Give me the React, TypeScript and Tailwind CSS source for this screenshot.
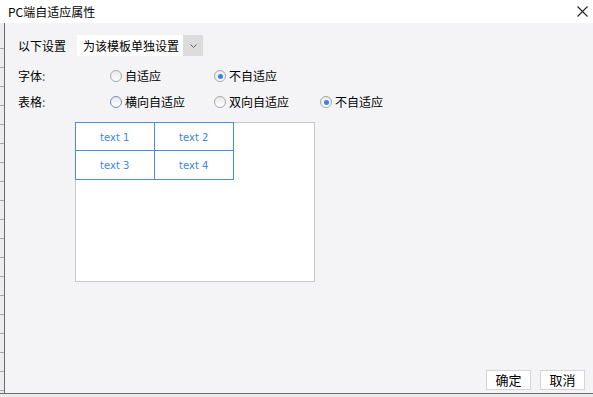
import React from "react";

function Radio({ checked, hover }: { checked?: boolean; hover?: boolean }) {
  return (
    <span
      className={
        "relative inline-flex h-[12px] w-[12px] shrink-0 items-center justify-center rounded-full border bg-[linear-gradient(to_bottom,#e9e9e9,#ffffff)] " +
        (hover ? "border-[#6f8cb2]" : "border-[#a6a6a6]")
      }
    >
      {checked && <span className="h-[5px] w-[5px] rounded-full bg-[#2f86f0]" />}
    </span>
  );
}

function RadioItem({ label, checked, hover, w }: { label: string; checked?: boolean; hover?: boolean; w: string }) {
  return (
    <div className={"flex items-center gap-[3px] " + w}>
      <Radio checked={checked} hover={hover} />
      <span>{label}</span>
    </div>
  );
}

export default function App() {
  return (
    <div
      className="flex h-[397px] w-[593px] flex-col overflow-hidden text-[12px] text-black"
      style={{ fontFamily: '"Noto Sans CJK SC", "Noto Sans", sans-serif' }}
    >
      <div className="flex h-[23px] shrink-0 items-center justify-between bg-white pl-[8px] pr-[5px]">
        <span className="text-[12px] leading-none">PC端自适应属性</span>
        <svg width="11" height="11" viewBox="0 0 11 11">
          <path d="M0.5 0.5 L10.5 10.5 M10.5 0.5 L0.5 10.5" stroke="#222" strokeWidth="1.1" />
        </svg>
      </div>
      <div className="flex min-h-0 flex-1">
        <div className="w-[4px] shrink-0 border-r border-[#6b6b6b] bg-[#ececec] bg-[repeating-linear-gradient(to_bottom,transparent_0,transparent_18px,#a8a8a8_18px,#a8a8a8_19px)] bg-[position:0_7px] box-content" />
        <div className="flex min-w-0 flex-1 flex-col bg-[#f4f4f6] pl-[13px] pt-[12px]">
          <div className="flex h-[21px] items-center">
            <span className="w-[59px]">以下设置</span>
            <div className="flex h-[21px] w-[126px]">
              <div className="flex flex-1 items-center bg-white pl-[6px]">为该模板单独设置</div>
              <div className="flex w-[20px] items-center justify-center bg-[#dcdcdc]">
                <svg width="7" height="4" viewBox="0 0 7 4">
                  <path d="M0.5 0.5 L3.5 3.5 L6.5 0.5" fill="none" stroke="#666" strokeWidth="1" />
                </svg>
              </div>
            </div>
          </div>
          <div className="mt-[12px] flex h-[16px] items-center">
            <span className="w-[92px]">字体<span className="text-[#555]">:</span></span>
            <RadioItem label="自适应" w="w-[104px]" />
            <RadioItem label="不自适应" checked w="w-[106px]" />
          </div>
          <div className="mt-[10px] flex h-[16px] items-center">
            <span className="w-[92px]">表格<span className="text-[#555]">:</span></span>
            <RadioItem label="横向自适应" hover w="w-[104px]" />
            <RadioItem label="双向自适应" w="w-[106px]" />
            <RadioItem label="不自适应" checked w="w-[106px]" />
          </div>
          <div className="ml-[57px] mt-[12px] h-[160px] w-[240px] border border-[#c9c9c9] bg-white">
            <div
              className="-m-px grid w-[159px] grid-cols-2 border border-[#4a8de6] text-[10px] text-[#3b86e6]"
              style={{ fontFamily: '"DejaVu Sans", sans-serif' }}
            >
              <div className="flex h-[28px] items-center justify-center border-b border-r border-[#4a8de6] pt-px">text 1</div>
              <div className="flex h-[28px] items-center justify-center border-b border-[#4a8de6] pt-px">text 2</div>
              <div className="flex h-[28px] items-center justify-center border-r border-[#4a8de6] pt-px">text 3</div>
              <div className="flex h-[28px] items-center justify-center pt-px">text 4</div>
            </div>
          </div>
          <div className="mt-auto flex justify-end gap-[9px] pb-[3px] pr-[8px]">
            <button className="flex h-[20px] w-[45px] items-center justify-center border border-[#d4d4d4] bg-white text-[13px]">确定</button>
            <button className="flex h-[20px] w-[45px] items-center justify-center border border-[#d4d4d4] bg-white text-[13px]">取消</button>
          </div>
        </div>
      </div>
      <div className="h-[3px] shrink-0 border-t border-[#6b6b6b] bg-[#ececec] box-content" />
    </div>
  );
}
